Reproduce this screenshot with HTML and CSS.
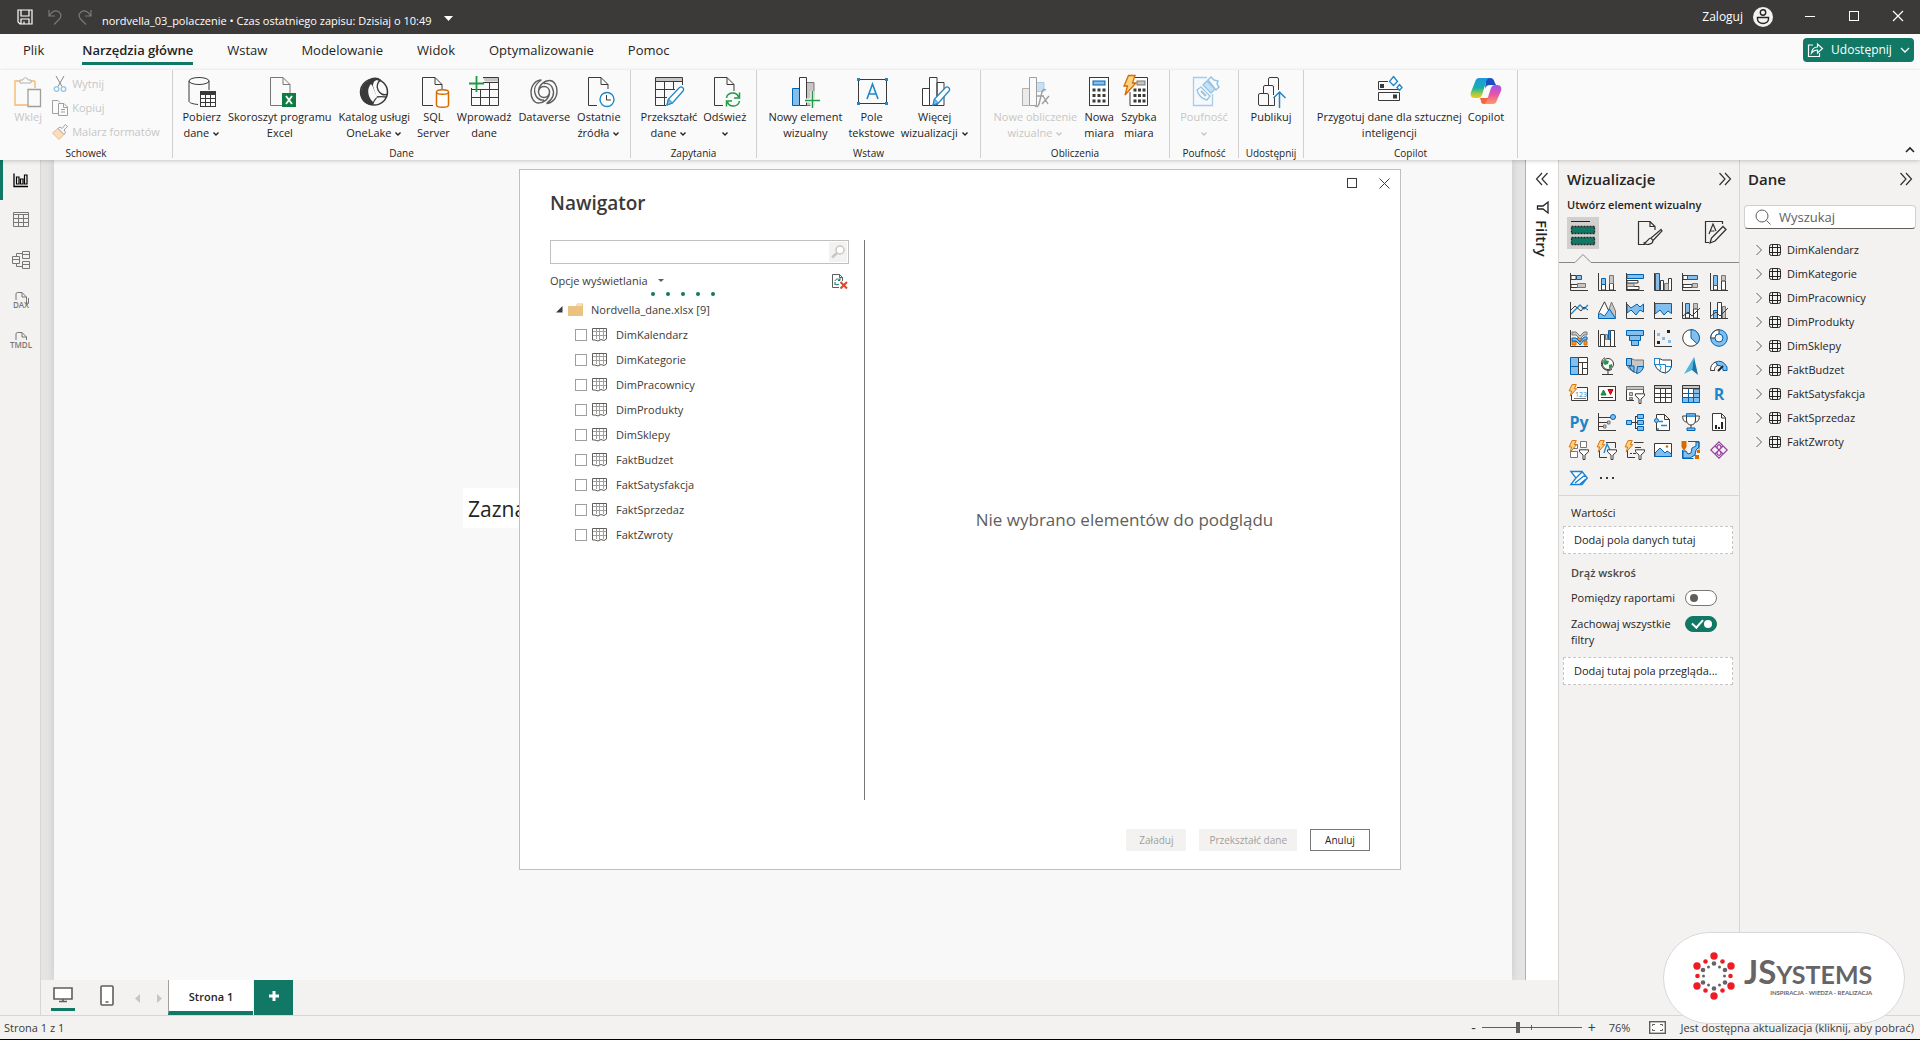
FILE: index.html
```html
<!DOCTYPE html>
<html lang="pl">
<head>
<meta charset="utf-8">
<title>nordvella_03_polaczenie</title>
<link rel="stylesheet" href="styles.css">
</head>
<body>
<svg class="defs" aria-hidden="true">
  <symbol id="caret" viewBox="0 0 8 8"><path d="M1.5 2.5 4 5l2.500-2.500" fill="none" stroke="currentColor" stroke-width="1.400"/></symbol>
  <symbol id="dbl" viewBox="0 0 14 14"><path d="M1.500 1l5.500 6-5.500 6M7 1l5.500 6L7 13" fill="none" stroke="#323130" stroke-width="1.200"/></symbol>
  <symbol id="sheet" viewBox="0 0 16 14"><path d="M.5.5h14v10.500l-2.500 1.500-3-1-3 1.500-3-1H.500z" fill="#fff" stroke="#605e5c"/><path d="M4.500 1v10M7.500 1v11M11.500 1v10M1 3.500h13M1 7.500h13" stroke="#a19f9d" fill="none"/></symbol>
  <symbol id="tbl" viewBox="0 0 12 12"><rect x=".5" y=".5" width="11" height="11" rx="2" fill="none" stroke="#252423"/><path d="M3.500.5v11M8.500.5v11M.5 3.500h11M.5 8.500h11" stroke="#252423" fill="none"/></symbol>
  <symbol id="chev" viewBox="0 0 8 12"><path d="M1.500 1l5 5-5 5" fill="none" stroke="#605e5c"/></symbol>
  <symbol id="pencil" viewBox="0 0 20 22"><path d="M2 20l1.500-6L14.500 2.500a2.500 2.500 0 0 1 3.500 3.500L7.500 18z" fill="#fff" stroke="#1f87c9" stroke-width="1.300"/><path d="M2 20l1.500-6 4 4z" fill="#83beec" stroke="#1f87c9"/></symbol>
  <symbol id="bolt" viewBox="0 0 10 14"><path d="M4 .6h4.500L6.500 5H9L2 13l1.500-5.500H.8z" fill="#fcd283" stroke="#d66b00"/></symbol>
  <symbol id="funnel" viewBox="0 0 10 11"><path d="M.5.8h9v2L6 6v4.500H4V6L.5 2.800z" fill="#fff" stroke="#3b3a39"/></symbol>
</svg>

<header class="titlebar">
  <div class="quick">
    <button aria-label="Zapisz"><svg width="16" height="16" viewBox="0 0 16 16"><path d="M1 1h14v14H3l-2-2zM4 1v6h8V1M4 15v-5h8v5M7 12.500v2" fill="none" stroke="#fff" stroke-width="1.200"/></svg></button>
    <button aria-label="Cofnij" disabled><svg width="16" height="16" viewBox="0 0 16 16"><path d="M2 1v6h6M2.500 6.500C5 2 9 .5 12 3s2 5.500 0 7.500L7 15.500" fill="none" stroke="#7a7877" stroke-width="1.200"/></svg></button>
    <button aria-label="Ponów" disabled><svg width="16" height="16" viewBox="0 0 16 16"><path d="M14 1v6H8M13.500 6.500C11 2 7 .5 4 3s-2 5.500 0 7.500l5 5" fill="none" stroke="#7a7877" stroke-width="1.200"/></svg></button>
  </div>
  <button class="doc">nordvella_03_polaczenie • Czas ostatniego zapisu: Dzisiaj o 10:49 <svg width="9" height="5" viewBox="0 0 9 5"><path d="M0 0h9L4.500 5z" fill="#fff"/></svg></button>
  <button class="login">Zaloguj <svg width="20" height="20" viewBox="0 0 20 20"><circle cx="10" cy="10" r="10" fill="#f3f2f1"/><circle cx="10" cy="5.500" r="2.700" fill="none" stroke="#252423" stroke-width="1.400"/><path d="M4.500 10.500h11v1.500a5.500 4.500 0 0 1-11 0z" fill="none" stroke="#252423" stroke-width="1.400"/></svg></button>
  <div class="wincontrols">
    <button aria-label="Minimalizuj"><svg width="10" height="10"><path d="M0 5.500h10" stroke="#fff"/></svg></button>
    <button aria-label="Maksymalizuj"><svg width="10" height="10"><rect x=".5" y=".5" width="9" height="9" fill="none" stroke="#fff"/></svg></button>
    <button aria-label="Zamknij"><svg width="10" height="10"><path d="M0 0l10 10M10 0L0 10" stroke="#fff" stroke-width="1.200"/></svg></button>
  </div>
</header>

<nav class="tabs">
  <button class="file">Plik</button>
  <button class="active">Narzędzia główne</button>
  <button>Wstaw</button>
  <button>Modelowanie</button>
  <button>Widok</button>
  <button>Optymalizowanie</button>
  <button>Pomoc</button>
  <button class="share"><svg width="16" height="16" viewBox="0 0 16 16"><path d="M6 3H1.500v11.500h11V11M4.500 11c.5-4 2.500-6 6-6V2l5 4.500-5 4.500V8c-3 0-4.500 1-6 3z" fill="none" stroke="#fff" stroke-width="1.200"/></svg>Udostępnij<svg width="10" height="10" viewBox="0 0 10 10"><path d="M1 3l4 4 4-4" fill="none" stroke="#fff" stroke-width="1.300"/></svg></button>
</nav>

<section class="ribbon">
  <div class="group g-clip">
    <div class="items">
      <button class="rb" disabled><svg width="32" height="32" viewBox="0 0 32 32"><path d="M10 5H3v24h13M23 5h-5M23 5v7" fill="none" stroke="#f5c88f" stroke-width="1.800"/><path d="M8 7V4h3c0-3 5-3 5 0h3v3z" fill="#fafafa" stroke="#b3b0ad"/><path d="M16 13.500h12.500v17H16z" fill="#fafafa" stroke="#a19f9d" stroke-width="1.300"/></svg>Wklej</button>
      <div class="stack">
        <button disabled><svg width="16" height="16" viewBox="0 0 16 16"><path d="M4 0l6 10.500M12 0L6 10.500" stroke="#8a8886" fill="none"/><circle cx="4.500" cy="13" r="2.300" fill="none" stroke="#94c3e4" stroke-width="1.300"/><circle cx="11.500" cy="13" r="2.300" fill="none" stroke="#94c3e4" stroke-width="1.300"/></svg>Wytnij</button>
        <button disabled><svg width="16" height="16" viewBox="0 0 16 16"><path d="M6 13.500H.5V.5H6l2 2M6.500 3.500H12l3.500 3.500v8.500h-9zM11.500 3.500v4h4M9 9.500h4M9 12h4" fill="none" stroke="#a19f9d"/></svg>Kopiuj</button>
        <button disabled><svg width="16" height="16" viewBox="0 0 16 16"><path d="M.5 9L6 4.500l6 6L7 15.500z" fill="#fbdcbb" stroke="#f0b98a"/><path d="M6 4.500l2-1.500 2 1.500 3.500-4 2 2L12 6l1.500 2.500-1.500 2z" fill="#fafafa" stroke="#a19f9d"/></svg>Malarz formatów</button>
      </div>
    </div>
    <h2>Schowek</h2>
  </div>
  <div class="group g-data">
    <div class="items">
      <button class="rb"><svg width="32" height="32" viewBox="0 0 32 32"><path d="M3 5v20c0 2 4 3 9 3.500M23 5v9" class="k"/><ellipse cx="13" cy="5" rx="10" ry="3.500" class="k"/><rect x="14.500" y="15.500" width="15" height="15" class="w"/><path d="M14.500 17.500h15" stroke="#3b3a39" stroke-width="3"/><path d="M14.500 22.500h15M14.500 26.500h15M19.500 17v13M24.500 17v13" class="k"/></svg>Pobierz<br>dane <svg class="c" width="8" height="8"><use href="#caret"/></svg></button>
      <button class="rb"><svg width="32" height="32" viewBox="0 0 32 32"><path d="M18 29.500H6.500v-28H19l7 7V17M19 1.500v7h7" class="k lite"/><rect x="18" y="17" width="14" height="14" fill="#107c41"/><path d="M22 20l6 8M28 20l-6 8" stroke="#fff" stroke-width="1.800"/></svg>Skoroszyt programu<br>Excel</button>
      <button class="rb"><svg width="32" height="32" viewBox="0 0 32 32"><ellipse cx="16" cy="16" rx="13.500" ry="13" fill="#fafafa" stroke="#3b3a39" stroke-width="1.500"/><path d="M10 5C12 1 20 0 23 4c-5-1-8 1-8 6l4 12c-4 5-3 6-4 7C6 29 2 23 3 16c0-5 3-9 7-11z" fill="#3b3a39"/><path d="M13 8c-4 4-4 12 2 18 1-2 2-4 4-5L14.500 10z" fill="#fafafa"/><path d="M23 4c-3 1-5 6-3 10s6 6 9 4M19 21c4-1 7 0 9 0" class="k" stroke-width="1.400"/></svg>Katalog usługi<br>OneLake <svg class="c" width="8" height="8"><use href="#caret"/></svg></button>
      <button class="rb"><svg width="32" height="32" viewBox="0 0 32 32"><path d="M16 29.500H5.500v-28H18l7 7V13M18 1.500v7h7" class="k"/><path d="M19.500 16v13c0 3 12 3 12 0V16" fill="#fff" stroke="#d66b00" stroke-width="1.500"/><ellipse cx="25.500" cy="16" rx="6" ry="2.300" fill="#fff" stroke="#d66b00" stroke-width="1.500"/></svg>SQL<br>Server</button>
      <button class="rb"><svg width="32" height="32" viewBox="0 0 32 32"><path d="M15 1.500h15.500v4H17z" fill="#c8c6c4"/><path d="M3.500 12v17.500h27v-28H15M15 6.500h15.500M3.500 13.500h27M3.500 21.500h27M12.500 13v16M21.500 6v23" class="k"/><path d="M8.500 0v16M1 7.500h15" stroke="#1e9b44" stroke-width="1.800"/></svg>Wprowadź<br>dane</button>
      <button class="rb"><svg width="32" height="32" viewBox="0 0 32 32"><path d="M21.500 16a5.500 5.500 0 1 1-5.500-5.500c3 0 5.500 2 5.500 5.500 0 7-6 11-11 11C6 27 3 22 3 16.500 3 9 8 4 13.500 4M10.500 16c0-7 6-11.500 11-11.500 4.500 0 7.500 5 7.500 10.500C29 22.500 24 27.500 18.500 27.500M13.500 4C7 8 5 14 8 20c2 3 5 4.500 8 4M18.500 27.500C25 23 27 17 24 11c-2-3-5-4-8-3.500" fill="none" stroke="#605e5c" stroke-width="1.400"/></svg>Dataverse</button>
      <button class="rb"><svg width="32" height="32" viewBox="0 0 32 32"><path d="M14 29.500H5.500v-28H18l7 7V13M18 1.500v7h7" class="k"/><circle cx="24" cy="23.500" r="7" fill="#fff" stroke="#1f87c9" stroke-width="1.400"/><path d="M23.500 19v5H28" class="k"/></svg>Ostatnie<br>źródła <svg class="c" width="8" height="8"><use href="#caret"/></svg></button>
    </div>
    <h2>Dane</h2>
  </div>
  <div class="group g-query">
    <div class="items">
      <button class="rb"><svg width="32" height="32" viewBox="0 0 32 32"><path d="M2.500 1.500h27v4h-27z" fill="#c8c6c4"/><path d="M13 29.500H2.500v-28h27V9M2.500 5.500h27M2.500 13.500H22M2.500 21.500H14M11.500 5.500v24M20.500 5.500V14" class="k"/><use href="#pencil" x="12" y="9" width="20" height="22"/></svg>Przekształć<br>dane <svg class="c" width="8" height="8"><use href="#caret"/></svg></button>
      <button class="rb"><svg width="32" height="32" viewBox="0 0 32 32"><path d="M14 29.500H5.500v-28H18l7 7V15M18 1.500v7h7" class="k"/><path d="M17.500 22c1-6 10-7 12-1M30.500 16.500V22H25M30.500 25c-1 6-10 7-12 1M17.500 30.500V25H23" fill="none" stroke="#1e9b44" stroke-width="1.500"/></svg>Odśwież<br><svg class="c" width="8" height="8"><use href="#caret"/></svg></button>
    </div>
    <h2>Zapytania</h2>
  </div>
  <div class="group g-insert">
    <div class="items">
      <button class="rb"><svg width="32" height="32" viewBox="0 0 32 32"><path d="M17 6.500h8v23h-8z" class="g"/><path d="M3.500 12.500h7v17h-7z" class="b"/><path d="M10.500 1.500h7v28h-7z" class="w"/><path d="M23.500 15v17M16 24.500h15" stroke="#fafafa" stroke-width="4"/><path d="M23.500 15v17M16 24.500h15" stroke="#1e9b44" stroke-width="1.500"/></svg>Nowy element<br>wizualny</button>
      <button class="rb"><svg width="32" height="32" viewBox="0 0 32 32"><rect x="2.500" y="3.500" width="28" height="24" class="k"/><path d="M1 2h3v3H1zM29 2h3v3h-3zM1 26h3v3H1zM29 26h3v3h-3z" fill="#1f87c9"/><path d="M11 23l5.500-15L22 23M13 18h7" fill="none" stroke="#1f87c9" stroke-width="1.600"/></svg>Pole<br>tekstowe</button>
      <button class="rb"><svg width="32" height="32" viewBox="0 0 32 32"><path d="M3.500 12.500h7v17h-7zM18 6.500h7v23h-7zM10.500 1.500h7.500v28h-7.500z" class="w"/><use href="#pencil" x="12" y="9" width="20" height="22"/></svg>Więcej<br>wizualizacji <svg class="c" width="8" height="8"><use href="#caret"/></svg></button>
    </div>
    <h2>Wstaw</h2>
  </div>
  <div class="group g-calc">
    <div class="items">
      <button class="rb" disabled><svg width="32" height="32" viewBox="0 0 32 32"><path d="M17 6.500h8v9h-8z" fill="#c8e0f4" stroke="#a8cce9"/><path d="M3.500 12.500h7v17h-7z" fill="#edebe9" stroke="#b3b0ad"/><path d="M10.500 1.500h7v28h-7z" fill="#fafafa" stroke="#a19f9d"/><path d="M16 30c3 2 4-1 5-6l2-8c1-3 2-3 4-2M18 20h7M24 20l5 8M30 20l-7 8" fill="none" stroke="#a19f9d" stroke-width="1.400"/></svg>Nowe obliczenie<br>wizualne <svg class="c" width="8" height="8"><use href="#caret"/></svg></button>
      <button class="rb"><svg width="32" height="32" viewBox="0 0 32 32"><rect x="6.500" y="1.500" width="19" height="28" class="w"/><rect x="10" y="5" width="12" height="4" class="b"/><path d="M9.500 14h13M9.500 19.500h13M9.500 25h13" stroke="#3b3a39" stroke-width="3" stroke-dasharray="3 2"/></svg>Nowa<br>miara</button>
      <button class="rb"><svg width="32" height="32" viewBox="0 0 32 32"><path d="M10 1.500h14.500v28H7V16" class="w"/><rect x="14" y="5" width="8" height="4" class="g"/><path d="M10.500 14h12M10.500 19.500h12M10.500 25h12" stroke="#3b3a39" stroke-width="3" stroke-dasharray="3 1.500"/><path d="M5.500-.5H12L9.500 7H13L2 19l2.500-9H1z" fill="#fcd283" stroke="#d66b00" stroke-width="1.300"/></svg>Szybka<br>miara</button>
    </div>
    <h2>Obliczenia</h2>
  </div>
  <div class="group g-conf">
    <div class="items">
      <button class="rb" disabled><svg width="32" height="32" viewBox="0 0 32 32"><path d="M19 1.500H5.500v28h19V18" fill="#f5f9fc" stroke="#a8cce9" stroke-width="1.300"/><path d="M9 14l4-3 9 9-3 4q-8-2-10-10z" fill="#fafafa" stroke="#94c3e4" stroke-width="1.300"/><path d="M13 15l5 5" stroke="#94c3e4" stroke-width="2"/><path d="M15 9l4-4 8 8-4 4z" fill="#c8e0f4" stroke="#94c3e4" stroke-width="1.300"/><path d="M20 4l3-3 3 3 4 1-1 3 2 3-3 3z" fill="#fafafa" stroke="#94c3e4" stroke-width="1.500"/></svg>Poufność<br><svg class="c" width="8" height="8"><use href="#caret"/></svg></button>
    </div>
    <h2>Poufność</h2>
  </div>
  <div class="group g-pub">
    <div class="items">
      <button class="rb"><svg width="32" height="32" viewBox="0 0 32 32"><path d="M13.500 9V3q0-1.500 1.500-1.500h7q1.500 0 1.500 1.500v11M8.500 17v-6q0-1.500 1.500-1.500h7q1.500 0 1.500 1.500v8M3.500 28v-9q0-1.500 1.500-1.500h7q1.500 0 1.500 1.500v10.500H5q-1.500 0-1.500-1.500zM13.500 29.500h6v-9" class="k"/><path d="M24.500 32V16M18.500 22l6-6 6 6" fill="none" stroke="#1f87c9" stroke-width="1.500"/></svg>Publikuj</button>
    </div>
    <h2>Udostępnij</h2>
  </div>
  <div class="group g-copilot">
    <div class="items">
      <button class="rb"><svg width="32" height="32" viewBox="0 0 32 32"><path d="M15 5.500H5.500v8h21M5.500 16.500h21v8h-21z" class="k"/><path d="M7 8h4v4H7zM20 18.500h4v4h-4z" fill="#3b3a39"/><path d="M20.500.5l4 5-4 4-4-4zM26.500 8.500l2.500 3-2.500 3-2.500-3z" fill="#fafafa" stroke="#1f87c9" stroke-width="1.300"/></svg>Przygotuj dane dla sztucznej<br>inteligencji</button>
      <button class="rb"><svg width="32" height="32" viewBox="0 0 32 32"><defs><linearGradient id="cpA" x2="0" y2="1"><stop offset="0" stop-color="#1e95e6"/><stop offset=".5" stop-color="#1ab0a8"/><stop offset=".8" stop-color="#a5cc40"/><stop offset="1" stop-color="#fcc419"/></linearGradient><linearGradient id="cpB" x2="0" y2="1"><stop offset="0" stop-color="#9a59f0"/><stop offset=".5" stop-color="#e955a5"/><stop offset="1" stop-color="#ff9a5c"/></linearGradient></defs><path d="M16 2h4c3 0 4 2 4.500 4L26 9h-6c-3 0-4 1-5 4z" fill="#1c4fc4"/><path d="M10 22h7l2-1-2 7h-3c-2 0-3-1-3-3z" fill="#f4653c"/><path d="M9 2h11c-2 0-3 1-4 4l-4 13c-1 2-2 3-4 3H5c-4 0-5-3-4-6L5 6c1-3 2-4 4-4z" fill="url(#cpA)"/><path d="M23 28H13c2 0 3-1 4-4l4-12c1-2 2-3 4-3h2c4 0 5 3 4 6l-4 9c-1 3-2 4-4 4z" fill="url(#cpB)"/></svg>Copilot</button>
    </div>
    <h2>Copilot</h2>
  </div>
  <button class="collapse" aria-label="Zwiń wstążkę"><svg width="10" height="8" viewBox="0 0 10 8"><path d="M1 6l4-4 4 4" fill="none" stroke="#252423" stroke-width="1.600"/></svg></button>
</section>

<main class="work">
  <nav class="rail">
    <button class="on" aria-label="Widok raportu"><svg width="18" height="18" viewBox="0 0 18 18"><path d="M2 2.500v13h14" fill="none" stroke="#000" stroke-width="1.300"/><path d="M4.500 6h2.500v7H4.500zM8.500 8H11v5H8.500zM12.500 4H15v9h-2.500z" fill="none" stroke="#000" stroke-width="1.200"/></svg></button>
    <button aria-label="Widok tabeli"><svg width="18" height="18" viewBox="0 0 18 18"><path d="M1.500 1.500h15v14h-15zM1.500 3.500h15M1.500 7.500h15M1.500 11.500h15M6.500 3.500v12M11.500 3.500v12" fill="none" stroke="#797775"/></svg></button>
    <button aria-label="Widok modelu"><svg width="20" height="20" viewBox="0 0 20 20"><path d="M11.500 1.500h7v7h-7zM11.500 4.500h7M11.500 11.500h7v7h-7zM11.500 14.500h7M1.500 6.500h7v7h-7zM1.500 9.500h7M5.500 6.500v-3h6M5.500 13.500v3h6" fill="none" stroke="#797775"/></svg></button>
    <button aria-label="Widok zapytania DAX"><svg width="20" height="20" viewBox="0 0 20 20"><path d="M5 10V4q0-1.500 1.500-1.500H11l4.500 4.500v7M11 2.500V7h4.500M17.500 8v5l-1.500 2" fill="none" stroke="#797775"/></svg><span>DAX</span></button>
    <button aria-label="Widok TMDL"><svg width="20" height="20" viewBox="0 0 20 20"><path d="M5 10V4q0-1.500 1.500-1.500H11l4.500 4.500v3M11 2.500V7h4.500" fill="none" stroke="#797775"/></svg><span>TMDL</span></button>
  </nav>

  <div class="center">
    <div class="stagerow">
      <div class="stage"><div class="page"><p class="hint">Zaznacz</p></div></div>
      <aside class="filters">
        <button aria-label="Rozwiń filtry"><svg class="flip" width="14" height="14"><use href="#dbl"/></svg></button>
        <div class="vtext"><svg width="13" height="13" viewBox="0 0 13 13"><path d="M12 1v11L7 8H1.500V5H7z" fill="none" stroke="#252423" stroke-width="1.300"/></svg><span>Filtry</span></div>
      </aside>
    </div>
    <footer class="pagetabs">
      <button class="view cur" aria-label="Układ pulpitu"><svg width="20" height="16" viewBox="0 0 20 16"><path d="M1 1h18v11H1zM6 14.500h8M10 12v2.500" fill="#fff" stroke="#605e5c" stroke-width="1.600"/></svg></button>
      <button class="view phone" aria-label="Układ mobilny"><svg width="14" height="21" viewBox="0 0 14 21"><rect x="1" y="1" width="12" height="19" rx="1" fill="#fff" stroke="#605e5c" stroke-width="1.600"/><path d="M5.500 17h3" stroke="#605e5c" stroke-width="1.500"/></svg></button>
      <button class="arrow" aria-label="Poprzednia" disabled><svg width="5" height="9"><path d="M5 0v9L0 4.500z" fill="#c8c6c4"/></svg></button>
      <button class="arrow" aria-label="Następna" disabled><svg width="5" height="9"><path d="M0 0v9l5-4.500z" fill="#c8c6c4"/></svg></button>
      <button class="ptab">Strona 1</button>
      <button class="add" aria-label="Nowa strona"><svg width="12" height="12"><path d="M6 1v10M1 6h10" stroke="#fff" stroke-width="3"/></svg></button>
    </footer>
  </div>

  <aside class="viz">
    <div class="phead"><h2>Wizualizacje</h2><button aria-label="Zwiń"><svg width="14" height="14"><use href="#dbl"/></svg></button></div>
    <h3>Utwórz element wizualny</h3>
    <div class="modes">
      <button class="sel" aria-label="Kompiluj"><svg width="26" height="26" viewBox="0 0 26 26"><path d="M1 1.500h19" stroke="#252423"/><path d="M1.500 6.500h23v7h-23zM1.500 17.500h23v7h-23z" fill="#117865" stroke="#252423" stroke-width="1.300" stroke-dasharray="2 1"/></svg></button>
      <button aria-label="Formatuj stronę"><svg width="26" height="26" viewBox="0 0 26 26"><path d="M8 24.500H1.500v-23H13l5 5V10M13 1.500v5h5" fill="none" stroke="#323130" stroke-width="1.200"/><path d="M24 9.500L14 18l2 2.500L25 11zM14 18c-3 0-3 4-7 5 3 3 9 1 9-2.500" fill="none" stroke="#323130" stroke-width="1.200"/></svg></button>
      <button aria-label="Analiza"><svg width="26" height="26" viewBox="0 0 26 26"><path d="M6 22.500H2.500v-21h17V4M6 14l4-10 3 7M7.500 11h4" fill="none" stroke="#323130" stroke-width="1.200"/><path d="M7 23l1.500-5L20 6.500l3 3L12 21z" fill="none" stroke="#323130" stroke-width="1.300"/></svg></button>
    </div>
    <svg class="notch" width="180" height="10" viewBox="0 0 180 10"><path d="M0 9.500h16l8-8 8 8h148" fill="none" stroke="#8a8886"/></svg>
    <div class="grid">
      <button aria-label="Skumulowany słupkowy"><svg viewBox="0 0 18 18"><path d="M6.500 2.500h5v4h-5z" class="b"/><path d="M1 2.500h5v4H1zM1 11.500h7v3H1z" class="w"/><path d="M7.500 10.500h8v4h-8z" class="g"/><path d="M.5 0v17.500H18" class="k"/></svg></button>
      <button aria-label="Skumulowany kolumnowy"><svg viewBox="0 0 18 18"><path d="M3.500 11h4v6h-4zM11.500 8h4v9h-4z" class="w"/><path d="M3.500 5.500h4v6h-4z" class="b"/><path d="M11.500 2.500h4v8h-4z" class="g"/><path d="M.5 0v17.500H18" class="k"/></svg></button>
      <button aria-label="Grupowany słupkowy"><svg viewBox="0 0 18 18"><path d="M1 7.500h11v2.500H1zM1 13.500h12v3H1z" class="w"/><path d="M1 10.500h7v3H1z" class="g"/><path d="M1 1.500h16.500v4H1z" class="b"/><path d="M.5 0v17.500H18" class="k"/></svg></button>
      <button aria-label="Grupowany kolumnowy"><svg viewBox="0 0 18 18"><path d="M6.500 7.500h3v10h-3zM14.500 5.500h3v12h-3z" class="w"/><path d="M10.500 10.500h4v7h-4z" class="g"/><path d="M1.500.5h4v17h-4z" class="b"/><path d="M.5 0v17.500H18" class="k"/></svg></button>
      <button aria-label="100% słupkowy"><svg viewBox="0 0 18 18"><path d="M1 2.500h5v4H1zM1 11.500h9v3H1z" class="w"/><path d="M5.500 2.500h10v4h-10z" class="b"/><path d="M10.500 10.500h5v4h-5z" class="g"/><path d="M.5 0v17.500H18" class="k"/></svg></button>
      <button aria-label="100% kolumnowy"><svg viewBox="0 0 18 18"><path d="M3.500 12h4v5h-4zM11.500 8h4v9h-4z" class="w"/><path d="M3.500 2.500h4v10h-4z" class="b"/><path d="M11.500 2.500h4v5h-4z" class="g"/><path d="M.5 0v17.500H18" class="k"/></svg></button>

      <button aria-label="Liniowy"><svg viewBox="0 0 18 18"><path d="M1 13L10 4l4 4 4-4" fill="none" stroke="#1f87c9" stroke-width="1.400"/><path d="M1 9l4-4 6 5 3-4 4 3M.5 1v16.500H18" class="k"/></svg></button>
      <button aria-label="Warstwowy"><svg viewBox="0 0 18 18"><path d="M8 17l5.500-16L17.500 10v7z" class="g"/><path d="M.5 12.500L6.500.8 14 17H.5z" class="w"/><path d="M.5 17.500v-4l2-1 4 2.500 5-7 6 9.500z" class="b"/></svg></button>
      <button aria-label="Skumulowany warstwowy"><svg viewBox="0 0 18 18"><path d="M1 3l4 4 6-4 3 3 3.500-3v8L14 9l-4 5-5-5-4 3z" class="b"/><path d="M.5 1v16.500H18" class="k"/></svg></button>
      <button aria-label="100% warstwowy"><svg viewBox="0 0 18 18"><path d="M1 2.500h16.500v10L14 10l-4 4-4-5-5 4z" class="b"/><path d="M.5 1v16.500H18" class="k"/></svg></button>
      <button aria-label="Liniowy i skumulowany"><svg viewBox="0 0 18 18"><path d="M3.500 12h4v5h-4zM11.500 8h4v9h-4z" class="w"/><path d="M3.500 2.500h4v10h-4z" class="b"/><path d="M11.500 2.500h4v5h-4z" class="g"/><path d="M.5 1v16.500H18M1 15l5-4 4 4 8-8" class="k"/></svg></button>
      <button aria-label="Liniowy i grupowany"><svg viewBox="0 0 18 18"><path d="M12.500 5.500h3v12h-3z" class="g"/><path d="M3.500 9.500h4v8h-4z" class="b"/><path d="M7.500 1.500h4v16h-4z" class="w"/><path d="M.5 1v16.500H18M1 15l5-4 4 4 8-8" class="k"/></svg></button>

      <button aria-label="Wstęgowy"><svg viewBox="0 0 18 18"><path d="M2 12h4v4H2zM14 12h3v4h-3zM7 9h5v3H7z" fill="#f7941d" stroke="#d66b00"/><path d="M2 3h4l4 4 4-4h3v3h-3l-4 4-4-4H2z" class="g"/><path d="M2 9h4l4 4 4-5h3v3h-3l-4 5-4-4H2z" class="b"/><path d="M.5 1v16.500H18" class="k"/></svg></button>
      <button aria-label="Kaskadowy"><svg viewBox="0 0 18 18"><path d="M2.500 5.500h4v12h-4zM12.500 1.500h4v16h-4z" class="w"/><path d="M7.500 5.500h2v5h-2z" class="g"/><path d="M10.500 1.500h1.500v9h-1.500z" class="b"/><path d="M.5 1v16.500H18" class="k"/></svg></button>
      <button aria-label="Lejek"><svg viewBox="0 0 18 18"><path d="M.5 1.500h17v5H.5zM3.500 6.500h11v5h-11zM5.500 11.500h7v5h-7z" class="b"/></svg></button>
      <button aria-label="Punktowy"><svg viewBox="0 0 18 18"><path d="M.5 1v16.500H18" class="k"/><path d="M3 4h3v3H3zM8 8h3v3H8zM14 11h3v3h-3z" fill="#83beec"/><path d="M13 1h3v3h-3zM3 12h3v3H3z" fill="#252423"/></svg></button>
      <button aria-label="Kołowy"><svg viewBox="0 0 18 18"><circle cx="9" cy="9" r="8.300" class="w"/><path d="M9 .7a8.300 8.300 0 0 1 6 14.100L9 9z" class="b"/></svg></button>
      <button aria-label="Pierścieniowy"><svg viewBox="0 0 18 18"><circle cx="9" cy="9" r="8.300" class="b"/><path d="M9 .7V5a4 4 0 0 0-4 4H.7A8.300 8.300 0 0 1 9 .7z" class="w"/><circle cx="9" cy="9" r="4" fill="#f3f2f1" stroke="#0063b1"/></svg></button>

      <button aria-label="Mapa drzewa"><svg viewBox="0 0 18 18"><path d="M.5.5h8v17h-8zM.5 9.500h8" class="b"/><path d="M8.500.5h9v17h-9zM8.500 5.500h9M12.500 5.500v12M12.500 11.500h5" class="w"/></svg></button>
      <button aria-label="Mapa"><svg viewBox="0 0 18 18"><circle cx="10" cy="7" r="5.500" class="w"/><path d="M7 3l4 1-1 3-3 1-2-2zM11 8l3-1v3l-3 2z" fill="#1e9b44"/><path d="M7 .8C3 2 2 9 6 12c3 2 6 2 8 0M10 13.500V17M4 17.500h11" class="k"/></svg></button>
      <button aria-label="Kartogram"><svg viewBox="0 0 18 18"><path d="M.5 1.500h5l3 1.500h9v7q-2 5-6 6l-4-1q-6-3-7-8z" class="g"/><path d="M.5 1.500h5v7h-5zM11.500 9.500h6q-1 6-7 7zM3 9h5v6q-3-1-5-6z" class="b"/></svg></button>
      <button aria-label="Mapa kształtów"><svg viewBox="0 0 18 18"><path d="M.5 1.500h5l3 1.500h9v7q-2 5-6 6l-4-1q-6-3-7-8z" class="w"/><path d="M.5 7.500v-6h5v6h6v9M.5 7.500h5q3 3 0 7M11.500 9.500h6q-1 5-6 6.500" fill="none" stroke="#1f87c9"/></svg></button>
      <button aria-label="Azure Maps"><svg viewBox="0 0 18 18"><path d="M12 0L2 17l8-4z" fill="#50b5e0"/><path d="M12 0l4 18-6-5z" fill="#1778a8"/></svg></button>
      <button aria-label="Miernik"><svg viewBox="0 0 18 18"><path d="M.6 13.500a8.400 8.400 0 0 1 5-8.500l2 3.500a4.500 4.500 0 0 0-3 5z" class="w"/><path d="M5.500 5q7-3 11.500 5v3.500h-4a4.500 4.500 0 0 0-5-5z" class="b"/><path d="M8 14l5-5" stroke="#252423" stroke-width="2"/></svg></button>

      <button aria-label="Karta"><svg viewBox="0 0 18 18"><path d="M7 2.500h10.500v13H1.500V10" class="w"/><text x="5" y="12" class="num">123</text><path d="M4 13.500h12" stroke="#797775"/><use href="#bolt" x="-2" y="-1" width="10" height="13"/></svg></button>
      <button aria-label="KPI"><svg viewBox="0 0 18 18"><rect x=".5" y="1.500" width="17" height="14" class="w"/><path d="M5.500 5l2.500 5H3z" fill="#1e9b44" stroke="#1e7a3a"/><path d="M12.500 9.500L10 4.500h5z" fill="#e81123" stroke="#c00"/><path d="M3 12.500h12" class="k"/></svg></button>
      <button aria-label="Fragmentator"><svg viewBox="0 0 18 18"><path d="M.5 1.500h17v14H.5z" class="w"/><path d="M.5 1.500h17V4.500H.5z" class="g"/><path d="M3.500 7.500h3v3h-3zM3.500 12.500h3v2h-3z" class="g"/><path d="M8 8h12v10H8z" fill="#f3f2f1"/><use href="#funnel" x="9" y="8" width="10" height="11"/></svg></button>
      <button aria-label="Tabela"><svg viewBox="0 0 18 18"><path d="M.5.5h17v17H.5zM.5 8.500h17M.5 12.500h17M6.500 4v13M11.500 4v13" class="w"/><path d="M.5.5h17v3H.5z" class="g dark"/></svg></button>
      <button aria-label="Macierz"><svg viewBox="0 0 18 18"><path d="M.5.5h17v17H.5z" class="w"/><path d="M11.500 4h6v13.500H.5v-5h11z" class="b"/><path d="M.5 8.500h17M.5 12.500h17M6.500 4v13M11.500 4v13" fill="none" stroke="#0063b1"/><path d="M.5.5h17v3H.5z" class="g dark"/></svg></button>
      <button aria-label="Skrypt R"><span>R</span></button>

      <button aria-label="Python"><span>Py</span></button>
      <button aria-label="Kluczowe czynniki"><svg viewBox="0 0 18 18"><path d="M.5 0v17.500H18M1 4.500h12M1 9.500h8M1 13.500h4" class="k"/><circle cx="15" cy="4" r="2.500" class="b"/><path d="M9.500 8h2.500v3H9.500zM5.500 12H8v3H5.500z" class="g"/></svg></button>
      <button aria-label="Drzewo dekompozycji"><svg viewBox="0 0 18 18"><path d="M6 9.500h5M9.500 3v12M9 3.500h3M9 15.500h3" class="k"/><path d="M.5 7.500h5v4h-5zM11.500 1.500h6v4h-6zM11.500 7.500h6v4h-6zM11.500 13.500h6v4h-6z" class="b"/></svg></button>
      <button aria-label="Pytania i odpowiedzi"><svg viewBox="0 0 18 18"><path d="M2.500 5V1.500h8l5 5v11h-13V10M10.500 1.500v5h5" class="w"/><path d="M5 8.500h4M7 12.500h6M3 16h2" stroke="#1f87c9" stroke-width="1.300"/><circle cx="2.500" cy="7.500" r="2" class="b"/></svg></button>
      <button aria-label="Metryki"><svg viewBox="0 0 18 18"><path d="M4 3H.7c0 5 2 6 4.300 6M14 3h3.300c0 5-2 6-4.300 6M4.500 2h9v5c0 3-2 5-4.500 5S4.500 10 4.500 7zM9 12v3" class="w"/><path d="M4.500.7h9v2.500h-9zM5 15h8v2.500H5z" class="b"/></svg></button>
      <button aria-label="Raport podzielony"><svg viewBox="0 0 18 18"><path d="M2.500.5h9l4 4v13h-13zM11.500.5V5h4" class="w"/><path d="M6 16v-4M9 16v-2M12 16V9" stroke="#252423" stroke-width="2"/></svg></button>

      <button aria-label="Fragmentator kart"><svg viewBox="0 0 18 18"><path d="M10.500.5h6v6h-6zM.5 10.500h7v6h-7zM2.500 3.500h5v4h-5z" fill="#fff" stroke="#797775"/><use href="#bolt" x="-2" y="-1" width="10" height="13"/><use href="#funnel" x="9" y="8" width="10" height="11"/></svg></button>
      <button aria-label="Fragmentator tekstu"><svg viewBox="0 0 18 18"><path d="M8 1.500h9.500V7M1.500 9v7.500H9" class="k"/><path d="M6 12l3-9 3 6" fill="none" stroke="#1f87c9" stroke-width="1.400"/><use href="#bolt" x="-2" y="-1" width="10" height="13"/><use href="#funnel" x="9" y="8" width="10" height="11"/></svg></button>
      <button aria-label="Fragmentator listy"><svg viewBox="0 0 18 18"><path d="M8 1.500h9.500M1.500 9v7.500H9M9 6.500h6M4 12.500h2M7 12.500h3" class="k"/><use href="#bolt" x="-2" y="-1" width="10" height="13"/><use href="#funnel" x="9" y="8" width="10" height="11"/></svg></button>
      <button aria-label="Obraz"><svg viewBox="0 0 18 18"><path d="M.5 2.500h17v13H.5z" class="w"/><path d="M1 12l5-5 5 5 2-2 4.500 3v2.500H1z" class="b"/><circle cx="13" cy="5.500" r="1.300" fill="#d66b00"/></svg></button>
      <button aria-label="ArcGIS"><svg viewBox="0 0 18 18"><path d="M1 10h3l2 3 3-1 1-5 4-2V1h3v5l-3 3-1 5-5 3H1z" class="b"/><path d="M6 .5h11v8M.5 9v8.500h11" fill="none" stroke="#0063b1"/><path d="M-.5 0h5v6L2 10-.5 6zM15 9h3v3h-3zM13 14h4v4h-4z" fill="#d66b00"/></svg></button>
      <button aria-label="Power Apps"><svg viewBox="0 0 18 18"><path d="M9 .8L17.200 9 9 17.200.8 9zM5 5l8 8M13 5l-8 8M9 3.500q4 2 0 5.500-4-3.500 0-5.500zM9 14.500q4-2 0-5.500-4 3.500 0 5.500z" fill="none" stroke="#9b3fa5" stroke-width="1.200"/></svg></button>

      <button aria-label="Power Automate"><svg viewBox="0 0 18 18"><path d="M.8 2.500H12L17.300 9 12 15.500H.8L6 9zM6 9l6-6M5 14L15 6M10 15l6-5" fill="#fff" stroke="#1683d8" stroke-width="1.300"/></svg></button>
      <button aria-label="Więcej wizualizacji"><svg viewBox="0 0 18 18"><path d="M2 8h2v2H2zM8 8h2v2H8zM14 8h2v2h-2z" fill="#3b3a39"/></svg></button>
    </div>
    <div class="wells">
      <h4>Wartości</h4>
      <div class="drop">Dodaj pola danych tutaj</div>
      <h4 class="drill">Drąż wskroś</h4>
      <div class="opt"><label for="sw1">Pomiędzy raportami</label><input type="checkbox" role="switch" id="sw1"></div>
      <div class="opt"><label for="sw2">Zachowaj wszystkie filtry</label><input type="checkbox" role="switch" id="sw2" checked></div>
      <div class="drop">Dodaj tutaj pola przegląda...</div>
    </div>
  </aside>

  <aside class="data">
    <div class="phead"><h2>Dane</h2><button aria-label="Zwiń"><svg width="14" height="14"><use href="#dbl"/></svg></button></div>
    <label class="search"><svg width="16" height="16" viewBox="0 0 16 16"><circle cx="7" cy="7" r="6" fill="none" stroke="#605e5c"/><path d="M11.500 11.500l4 4" stroke="#605e5c"/></svg><input type="text" placeholder="Wyszukaj" aria-label="Wyszukaj"></label>
    <ul>
      <li><button><svg width="8" height="12"><use href="#chev"/></svg><svg width="12" height="12"><use href="#tbl"/></svg>DimKalendarz</button></li>
      <li><button><svg width="8" height="12"><use href="#chev"/></svg><svg width="12" height="12"><use href="#tbl"/></svg>DimKategorie</button></li>
      <li><button><svg width="8" height="12"><use href="#chev"/></svg><svg width="12" height="12"><use href="#tbl"/></svg>DimPracownicy</button></li>
      <li><button><svg width="8" height="12"><use href="#chev"/></svg><svg width="12" height="12"><use href="#tbl"/></svg>DimProdukty</button></li>
      <li><button><svg width="8" height="12"><use href="#chev"/></svg><svg width="12" height="12"><use href="#tbl"/></svg>DimSklepy</button></li>
      <li><button><svg width="8" height="12"><use href="#chev"/></svg><svg width="12" height="12"><use href="#tbl"/></svg>FaktBudzet</button></li>
      <li><button><svg width="8" height="12"><use href="#chev"/></svg><svg width="12" height="12"><use href="#tbl"/></svg>FaktSatysfakcja</button></li>
      <li><button><svg width="8" height="12"><use href="#chev"/></svg><svg width="12" height="12"><use href="#tbl"/></svg>FaktSprzedaz</button></li>
      <li><button><svg width="8" height="12"><use href="#chev"/></svg><svg width="12" height="12"><use href="#tbl"/></svg>FaktZwroty</button></li>
    </ul>
  </aside>
</main>

<footer class="status">
  <span>Strona 1 z 1</span>
  <div class="zoom">
    <button class="sign" aria-label="Pomniejsz">-</button>
    <input type="range" min="0" max="200" value="72" aria-label="Powiększenie">
    <button class="sign" aria-label="Powiększ">+</button>
    <span class="pct">76%</span>
    <button aria-label="Dopasuj do strony"><svg width="17" height="13" viewBox="0 0 17 13"><rect x=".7" y=".7" width="15.600" height="11.600" fill="#fff" stroke="#605e5c" stroke-width="1.400"/><path d="M3.500 5V3.500H6M11 3.500h2.500V5M13.500 8v1.500H11M6 9.500H3.500V8" fill="none" stroke="#605e5c"/></svg></button>
    <a href="#">Jest dostępna aktualizacja (kliknij, aby pobrać)</a>
  </div>
</footer>

<section class="dialog" role="dialog" aria-labelledby="nav-title">
  <div class="dlgctl">
    <button aria-label="Maksymalizuj"><svg width="10" height="10"><rect x=".5" y=".5" width="9" height="9" fill="none" stroke="#3b3a39"/></svg></button>
    <button aria-label="Zamknij"><svg width="11" height="11"><path d="M.5.5l10 10M10.500.5l-10 10" stroke="#3b3a39"/></svg></button>
  </div>
  <h1 id="nav-title">Nawigator</h1>
  <div class="dlgbody">
    <div class="left">
      <div class="find"><input type="text" aria-label="Szukaj"><button aria-label="Szukaj"><svg width="14" height="14" viewBox="0 0 14 14"><circle cx="9" cy="5" r="4" fill="#fff" stroke="#c8c6c4" stroke-width="1.500"/><path d="M6 8l-5 4.500" stroke="#c8c6c4" stroke-width="2.500"/></svg></button></div>
      <div class="optrow"><button>Opcje wyświetlania <svg width="6" height="3"><path d="M0 0h6L3 3z" fill="#605e5c"/></svg></button>
        <button aria-label="Odśwież"><svg width="17" height="16" viewBox="0 0 17 16"><path d="M8 14.500H1.500v-13h7l3 3V8M8.500 1.500v3h3" fill="none" stroke="#605e5c"/><path d="M4 8c1-3 4-2 5-1M9 5v2.500H7M4 9v3M4 11c1 1 3 1 4 0" fill="none" stroke="#117865"/><path d="M9.500 9l6.500 6.500M16 9l-6.500 6.500" stroke="#d9472b" stroke-width="2"/></svg></button>
        <div class="dots"><i></i><i></i><i></i><i></i><i></i></div>
      </div>
      <div class="root"><svg width="7" height="7"><path d="M6.500 0v6.500H0z" fill="#3b3a39"/></svg><svg width="16" height="14" viewBox="0 0 16 14"><path d="M0 3h8l1-2.500h6V13H0z" fill="#eac282"/><path d="M9 2h5" stroke="#fff"/></svg><span>Nordvella_dane.xlsx [9]</span></div>
      <label class="leaf"><input type="checkbox"><svg width="16" height="14"><use href="#sheet"/></svg>DimKalendarz</label>
      <label class="leaf"><input type="checkbox"><svg width="16" height="14"><use href="#sheet"/></svg>DimKategorie</label>
      <label class="leaf"><input type="checkbox"><svg width="16" height="14"><use href="#sheet"/></svg>DimPracownicy</label>
      <label class="leaf"><input type="checkbox"><svg width="16" height="14"><use href="#sheet"/></svg>DimProdukty</label>
      <label class="leaf"><input type="checkbox"><svg width="16" height="14"><use href="#sheet"/></svg>DimSklepy</label>
      <label class="leaf"><input type="checkbox"><svg width="16" height="14"><use href="#sheet"/></svg>FaktBudzet</label>
      <label class="leaf"><input type="checkbox"><svg width="16" height="14"><use href="#sheet"/></svg>FaktSatysfakcja</label>
      <label class="leaf"><input type="checkbox"><svg width="16" height="14"><use href="#sheet"/></svg>FaktSprzedaz</label>
      <label class="leaf"><input type="checkbox"><svg width="16" height="14"><use href="#sheet"/></svg>FaktZwroty</label>
    </div>
    <div class="preview">Nie wybrano elementów do podglądu</div>
  </div>
  <div class="dlgfoot">
    <button disabled>Załaduj</button>
    <button disabled>Przekształć dane</button>
    <button class="cancel">Anuluj</button>
  </div>
</section>

<div class="brand">
  <svg width="44" height="50" viewBox="0 0 44 50">
    <g fill="#ee1c25"><circle cx="22" cy="5" r="3.700"/><circle cx="39" cy="15" r="3.700"/><circle cx="39" cy="35" r="3.700"/><circle cx="22" cy="45" r="3.700"/><circle cx="5" cy="35" r="3.700"/><circle cx="5" cy="15" r="3.700"/><circle cx="30.500" cy="10.500" r="2.300"/><circle cx="38.500" cy="25" r="2.300"/><circle cx="30.500" cy="39.500" r="2.300"/><circle cx="13.500" cy="39.500" r="2.300"/><circle cx="5.500" cy="25" r="2.300"/><circle cx="13.500" cy="10.500" r="2.300"/></g>
    <g fill="#666466"><circle cx="22" cy="12.500" r="2.300"/><circle cx="33" cy="19" r="2.300"/><circle cx="33" cy="31.500" r="2.300"/><circle cx="22" cy="37.500" r="2.300"/><circle cx="11" cy="31.500" r="2.300"/><circle cx="11" cy="19" r="2.300"/><circle cx="27.500" cy="16" r="1.500"/><circle cx="32.500" cy="25" r="1.500"/><circle cx="27.500" cy="34" r="1.500"/><circle cx="16.500" cy="34" r="1.500"/><circle cx="11.500" cy="25" r="1.500"/><circle cx="16.500" cy="16" r="1.500"/></g>
  </svg>
  <div class="words"><strong><big>JS</big>YSTEMS</strong><small>INSPIRACJA - WIEDZA - REALIZACJA</small></div>
</div>
</body>
</html>
```
FILE: styles.css
```css
* { box-sizing: border-box; }
body {
  margin: 0;
  min-height: 100vh;
  display: flex;
  flex-direction: column;
  position: relative;
  overflow: hidden;
  background: #f3f2f1;
  border-bottom: 1px solid #000;
  color: #252423;
  font: 12px/16px "Open Sans", "Noto Sans", sans-serif;
}
button {
  margin: 0;
  padding: 0;
  border: 0;
  background: none;
  color: inherit;
  font: inherit;
  white-space: nowrap;
}
h1, h2, h3, h4, p, ul { margin: 0; padding: 0; font-size: inherit; font-weight: inherit; }
svg { flex: none; overflow: visible; }
.defs { position: absolute; width: 0; height: 0; }
.k { fill: none; stroke: #3b3a39; }
.w { fill: #fff; stroke: #3b3a39; }
.b { fill: #83beec; stroke: #0063b1; }
.g { fill: #c8c6c4; stroke: #797775; }
.dark { stroke: #3b3a39; }
.lite { stroke: #797775; }

/* title bar */
.titlebar {
  height: 34px;
  display: flex;
  align-items: center;
  padding-left: 17px;
  background: #3b3a39;
  color: #fff;
}
.quick { display: flex; gap: 14px; }
.quick button { height: 16px; }
.doc { margin: 7px auto 0 9px; display: flex; align-items: center; gap: 12px; font-size: 11px; }
.doc svg { margin-bottom: 4px; }
.login { display: flex; align-items: center; gap: 10px; margin-right: 15px; }
.wincontrols { display: flex; }
.wincontrols button { width: 44px; height: 34px; }

/* ribbon tabs */
.tabs {
  height: 36px;
  display: flex;
  align-items: flex-start;
  gap: 34px;
  padding: 4px 6px 0 23px;
  background: #fafafa;
  font-size: 13px;
}
.tabs button { height: 27px; border-bottom: 3px solid transparent; }
.tabs .file { margin-right: 4px; }
.tabs .active { border-bottom-color: #117865; font-weight: 600; }
.tabs .share {
  margin-left: auto;
  width: 111px;
  height: 24px;
  display: flex;
  align-items: center;
  justify-content: center;
  gap: 8px;
  border: 0;
  border-radius: 4px;
  background: #117865;
  color: #fff;
  font-size: 12px;
}

/* ribbon */
.ribbon {
  position: relative;
  z-index: 1;
  height: 90px;
  display: flex;
  background: #fafafa;
  box-shadow: 0 1px 4px #0003;
  font-size: 11px;
}
.group {
  display: flex;
  flex-direction: column;
  justify-content: space-between;
  height: 88px;
  padding-top: 6px;
  border-right: 1px solid #d2d0ce;
}
.group h2 { font-size: 10px; line-height: 14px; text-align: center; margin-bottom: -2px; }
.items { display: flex; justify-content: center; align-items: flex-start; gap: 6px; }
.rb { line-height: 16px; text-align: center; }
.rb > svg:first-child { display: block; margin: 0 auto 1px; }
.c { vertical-align: -1px; }
.rb:disabled, .stack button { color: #c8c6c4; }
.g-clip { width: 173px; }
.g-data { width: 458px; }
.g-data .items { gap: 7px; }
.g-query { width: 126px; }
.g-insert { width: 224px; }
.g-calc { width: 189px; }
.g-conf { width: 69px; }
.g-pub { width: 65px; }
.g-copilot { width: 214px; }
.g-clip .items { gap: 8px; }
.stack { display: flex; flex-direction: column; gap: 8px; }
.stack button { display: flex; align-items: center; gap: 4px; }
.collapse { margin: auto 5px 6px auto; height: 8px; display: flex; }

/* work area */
.work { flex: 1; display: flex; }
.rail { width: 41px; border-right: 1px solid #d8d6d4; }
.rail button { position: relative; display: flex; align-items: center; justify-content: center; width: 42px; height: 40px; }
.rail .on { border-left: 3px solid #117865; padding-right: 3px; }
.rail span {
  position: absolute;
  left: 0;
  right: 0;
  top: 21px;
  font-size: 8px;
  line-height: 8px;
  font-weight: 600;
  color: #797775;
}
.center { flex: 1; display: flex; flex-direction: column; }
.stagerow { flex: 1; display: flex; }
.stage { flex: 1; padding: 0 13px; background: #e4e4e4; border-right: 1px solid #b3b0ad; overflow: hidden; }
.page { height: 100%; padding-top: 328px; background: #f8f8f8; box-shadow: 0 0 8px #0002; }
.hint { width: 260px; height: 40px; margin-left: 409px; padding-left: 5px; background: #fff; font-size: 21px; line-height: 42px; }
.filters { width: 32px; padding-top: 12px; background: #fff; text-align: center; }
.filters button { height: 14px; display: block; margin: 0 auto; }
.flip { transform: scaleX(-1); }
.vtext { display: flex; flex-direction: column; align-items: center; gap: 6px; margin-top: 15px; }
.vtext span { writing-mode: vertical-rl; font-size: 15px; line-height: 20px; font-weight: 600; }

.pagetabs { height: 35px; display: flex; align-items: stretch; padding-left: 10px; }
.view { width: 24px; display: flex; align-items: flex-start; justify-content: center; padding-top: 7px; border-bottom: 3px solid transparent; height: 31px; }
.view.cur { border-bottom-color: #117865; }
.phone { padding-top: 5px; margin-left: 20px; margin-right: 7px; }
.arrow { width: 22px; padding-top: 2px; }
.ptab { width: 85px; margin-left: -2px; border-left: 1px solid #a19f9d; border-bottom: 4px solid #117865; background: #fff; font-weight: 600; font-size: 11px; padding-top: 2px; }
.add { width: 39px; margin-left: 1px; background: #117865; }

/* side panes */
.viz, .data { width: 181px; border-left: 1px solid #d8d6d4; }
.phead { display: flex; justify-content: space-between; align-items: center; padding: 9px 7px 0 8px; }
.phead h2 { font-size: 15px; line-height: 20px; font-weight: 600; }
.phead button { height: 14px; display: flex; }
.viz h3 { padding: 8px 0 0 8px; font-size: 11px; font-weight: 600; }
.modes { display: flex; justify-content: space-between; padding: 4px 7px 0 8px; }
.modes button { width: 32px; height: 32px; display: flex; align-items: center; justify-content: center; }
.modes .sel { background: #d2d0ce; }
.notch { display: block; margin-top: 4px; }
.grid { display: grid; grid-template-columns: repeat(6, 28px); grid-auto-rows: 28px; padding: 5px 0 3px 6px; border-bottom: 1px solid #d8d6d4; }
.grid svg { display: block; width: 18px; height: 18px; margin: auto; }
.grid span { font: 700 16px/18px "Open Sans", sans-serif; color: #1f87c9; }
.num { font: 7px "Open Sans", sans-serif; fill: #1f87c9; }
.wells { padding: 9px 6px 0 4px; font-size: 11px; }
.wells h4 { padding-left: 8px; }
.drop { height: 28px; margin: 5px 0 11px; padding-left: 10px; border: 1px dashed #c8c6c4; background: #fff; line-height: 26px; }
.drill { font-weight: 600; color: #484644; }
.opt { display: flex; justify-content: space-between; align-items: flex-start; padding: 0 16px 0 8px; margin-top: 9px; }
.opt label { width: 112px; }
.opt + .opt { margin-top: 10px; }
.opt + .drop { margin-top: 9px; }
.opt input {
  appearance: none;
  flex: none;
  width: 32px;
  height: 16px;
  margin: 0;
  padding: 3px 4px;
  display: flex;
  align-items: center;
  border: 1px solid #797775;
  border-radius: 8px;
  background: #fff;
}
.opt input::after { content: ""; width: 8px; height: 8px; border-radius: 50%; background: #605e5c; }
.opt input:checked { justify-content: space-between; border-color: #117865; background: #117865; padding-left: 8px; }
.opt input:checked::before { content: ""; width: 5px; height: 9px; margin-bottom: 3px; border: solid #fff; border-width: 0 2px 2px 0; transform: rotate(42deg); }
.opt input:checked::after { background: #fff; }

.search { display: flex; align-items: center; gap: 8px; height: 24px; margin: 16px 4px 9px; padding-left: 10px; border: 1px solid #d2d0ce; border-bottom-color: #605e5c; border-radius: 4px; background: #fff; }
.search input { width: 100%; min-width: 0; padding: 0; border: 0; outline: 0; background: none; font: 13px/18px "Open Sans", sans-serif; }
.search input::placeholder { color: #605e5c; }
.data ul { list-style: none; font-size: 11px; }
.data li button { height: 24px; display: flex; align-items: center; gap: 6px; padding-left: 15px; }

/* status bar */
.status { height: 24px; display: flex; align-items: center; justify-content: space-between; padding: 0 6px 0 4px; border-top: 1px solid #d8d6d4; font-size: 11px; color: #3b3a39; }
.zoom { display: flex; align-items: center; gap: 6px; }
.sign { font-size: 14px; }
.zoom input {
  appearance: none;
  width: 100px;
  height: 12px;
  margin: 0;
  background:
    linear-gradient(#605e5c, #605e5c) center / 100% 1px no-repeat,
    linear-gradient(#605e5c, #605e5c) center / 1px 5px no-repeat;
}
.zoom input::-webkit-slider-thumb { appearance: none; width: 4px; height: 11px; background: #605e5c; }
.pct { margin: 0 13px 0 7px; }
.zoom a { margin-left: 8px; color: inherit; text-decoration: none; }
.zoom button { display: flex; }

/* navigator dialog */
.dialog {
  position: absolute;
  z-index: 2;
  left: 519px;
  top: 169px;
  width: 882px;
  height: 701px;
  display: flex;
  flex-direction: column;
  border: 1px solid #c0c0c0;
  background: #fff;
  padding: 0 30px 18px;
  color: #3b3a39;
}
.dlgctl { display: flex; justify-content: flex-end; gap: 22px; height: 24px; align-items: center; margin: 1px -20px 0 0; }
.dlgctl button { height: 11px; display: flex; }
.dialog h1 { font-size: 19px; line-height: 24px; font-weight: 600; margin: -4px 0 25px; }
.dlgbody { height: 560px; display: flex; }
.left { width: 315px; padding-right: 15px; border-right: 1px solid #797775; font-size: 11px; }
.find { display: flex; height: 24px; border: 1px solid #c0c0c0; padding: 1px; }
.find input { flex: 1; border: 0; outline: 0; padding: 0 4px; }
.find button { width: 18px; background: #f3f2f1; display: flex; align-items: center; justify-content: center; }
.optrow { position: relative; display: flex; align-items: center; justify-content: space-between; height: 33px; padding-right: 1px; }
.optrow button { display: flex; align-items: center; gap: 10px; }
.dots { position: absolute; left: 101px; top: 28px; display: flex; gap: 11px; }
.dots i { width: 4px; height: 4px; border-radius: 50%; background: #117865; }
.root { display: flex; align-items: center; height: 25px; gap: 5px; padding-left: 6px; }
.root span { margin-left: 2px; }
.leaf { display: flex; align-items: center; height: 25px; padding-left: 25px; gap: 5px; }
.leaf svg { margin-right: 3px; }
.leaf input { appearance: none; width: 12px; height: 12px; margin: 0; border: 1px solid #a19f9d; background: #fff; }
.preview { flex: 1; display: flex; align-items: center; justify-content: center; padding-left: 14px; color: #605e5c; font-size: 17px; line-height: 24px; }
.dlgfoot { display: flex; justify-content: flex-end; gap: 13px; margin-top: auto; font-size: 10px; }
.dlgfoot button { min-width: 60px; height: 22px; padding: 0 10px; background: #f3f2f1; color: #a19f9d; }
.dlgfoot .cancel { border: 1px solid #797775; background: #fff; color: #252423; }

/* watermark */
.brand {
  position: absolute;
  z-index: 3;
  right: 15px;
  bottom: 15px;
  width: 242px;
  height: 92px;
  display: flex;
  align-items: center;
  gap: 8px;
  padding: 0 0 4px 28px;
  border: 1px solid #d8d8dc;
  border-radius: 46px;
  background: #fff;
}
.words { display: flex; flex-direction: column; color: #666466; font-family: Lato, sans-serif; }
.words strong { font-size: 25px; line-height: 30px; }
.words big { font-size: 33px; }
.words small { align-self: flex-end; font-size: 6px; line-height: 8px; font-weight: 700; }
```
